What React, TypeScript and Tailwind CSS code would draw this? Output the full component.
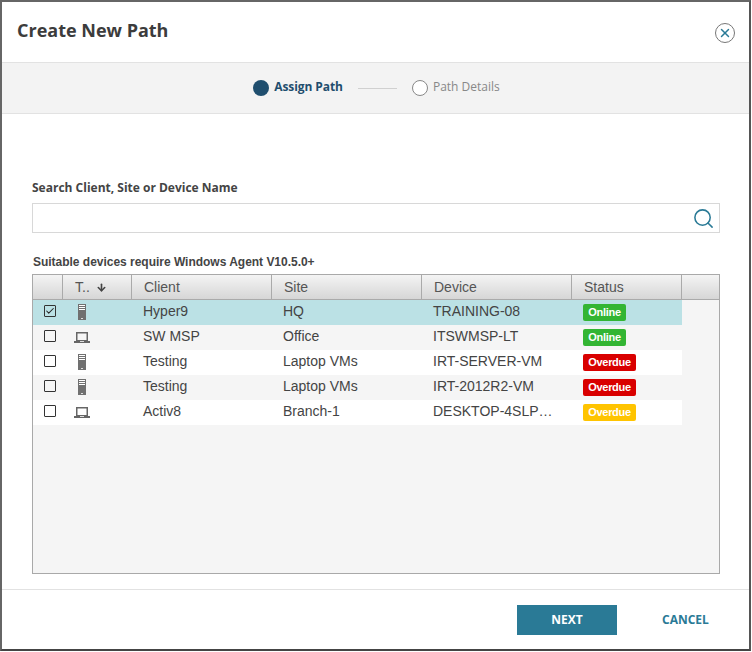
import { ArrowDown, Check, Search, X } from 'lucide-react'

type Row = {
  type: 'server' | 'laptop'
  client: string
  site: string
  device: string
  status: 'Online' | 'Overdue' | 'Late'
  checked?: boolean
}

const rows: Row[] = [
  { type: 'server', client: 'Hyper9', site: 'HQ', device: 'TRAINING-08', status: 'Online', checked: true },
  { type: 'laptop', client: 'SW MSP', site: 'Office', device: 'ITSWMSP-LT', status: 'Online' },
  { type: 'server', client: 'Testing', site: 'Laptop VMs', device: 'IRT-SERVER-VM', status: 'Overdue' },
  { type: 'server', client: 'Testing', site: 'Laptop VMs', device: 'IRT-2012R2-VM', status: 'Overdue' },
  { type: 'laptop', client: 'Activ8', site: 'Branch-1', device: 'DESKTOP-4SLP…', status: 'Late' },
]

function ServerIcon() {
  return (
    <svg width="8" height="16" viewBox="0 0 8 16">
      <rect x="0" y="0" width="8" height="16" fill="#707070" />
      <rect x="1" y="1" width="6" height="1" fill="#fff" />
      <rect x="1" y="3" width="6" height="1" fill="#fff" />
      <rect x="1" y="5" width="6" height="1" fill="#fff" />
      <rect x="3" y="14" width="2" height="1" fill="#ddd" />
    </svg>
  )
}

function LaptopIcon() {
  return (
    <svg width="16" height="11" viewBox="0 0 16 11">
      <rect x="2.75" y="0.75" width="10.5" height="8" fill="none" stroke="#666" strokeWidth="1.5" />
      <rect x="0" y="9" width="16" height="2" fill="#666" />
      <rect x="6" y="9" width="4" height="1" fill="#ddd" />
    </svg>
  )
}

function Badge({ status }: { status: Row['status'] }) {
  if (status === 'Online') {
    return <span className="flex h-[17px] w-[43px] items-center justify-center rounded-[2px] bg-[#33b533] text-[11px] font-bold tracking-[-0.3px] text-white">Online</span>
  }
  return (
    <span className={`flex h-[17px] w-[53px] items-center justify-center rounded-[2px] text-[11px] font-bold tracking-[-0.3px] text-white ${status === 'Late' ? 'bg-[#ffc400]' : 'bg-[#d90000]'}`}>
      Overdue
    </span>
  )
}

const headCell = 'flex h-full items-center border-r border-[#aaa] pl-3 text-[14px] text-[#555]'

export default function App() {
  return (
    <div className="h-[652px] w-[752px] bg-white pr-px pb-px font-['Liberation_Sans',sans-serif]">
      <div className="flex h-full w-full flex-col border-t-2 border-l-2 border-r-2 border-b-2 border-t-[#666] border-l-[#666] border-r-[#555] border-b-[#444]">
        <div className="flex h-[61px] shrink-0 items-center justify-between border-b border-[#e2e2e2] pr-[14px] pb-[4px] pl-[15px]">
          <h1 className="font-['Open_Sans',sans-serif] text-[18px] font-bold text-[#3c3c3c]">Create New Path</h1>
          <button className="mt-[5px] flex h-5 w-5 items-center justify-center rounded-full border border-[#777]">
            <X size={14} strokeWidth={2.5} className="text-[#2a7a96]" />
          </button>
        </div>

        <div className="flex h-[51px] shrink-0 items-center justify-center border-b border-[#e2e2e2] bg-[#f3f3f3] pl-[2px]">
          <span className="h-4 w-4 rounded-full bg-[#1f4e6e]" />
          <span className="ml-[5px] pb-[2px] font-['Open_Sans',sans-serif] text-[12px] font-bold tracking-[-0.08px] text-[#1f4e6e]">Assign Path</span>
          <span className="mr-[15px] ml-[15px] h-px w-[39px] bg-[#d0d0d0]" />
          <span className="h-4 w-4 rounded-full border border-[#888] bg-white" />
          <span className="ml-[5px] pb-[2px] font-['Open_Sans',sans-serif] text-[12px] text-[#888]">Path Details</span>
        </div>

        <div className="flex min-h-0 flex-1 flex-col pt-[66px] pr-[29px] pl-[30px]">
          <label className="font-['Open_Sans',sans-serif] text-[12px] leading-4 font-bold text-[#444]">Search Client, Site or Device Name</label>
          <div className="mt-[7px] flex h-[30px] items-center justify-end border border-[#d8d8d8] pr-[4px]">
            <Search size={23} strokeWidth={1.6} className="text-[#2a7a96]" />
          </div>
          <p className="mt-[21px] ml-px text-[12px] leading-4 font-bold tracking-[-0.02px] text-[#444]">Suitable devices require Windows Agent V10.5.0+</p>
          <div className="mt-[4px] flex h-[300px] flex-col border border-[#a9a9a9] bg-[#f5f5f5]">
            <div className="flex h-[25px] shrink-0 items-center border-b border-[#aaa] bg-gradient-to-b from-[#f4f4f4] to-[#d6d6d6]">
              <div className="h-full w-[30px] border-r border-[#aaa]" />
              <div className={`${headCell} w-[69px]`}>
                T..
                <ArrowDown size={11} strokeWidth={3.5} className="ml-[6px] text-[#444]" />
              </div>
              <div className={`${headCell} w-[140px]`}>Client</div>
              <div className={`${headCell} w-[150px]`}>Site</div>
              <div className={`${headCell} w-[150px]`}>Device</div>
              <div className={`${headCell} w-[110px]`}>Status</div>
            </div>
            {rows.map((r, i) => (
              <div
                key={i}
                className={`flex h-[25px] w-[649px] shrink-0 items-center text-[14px] text-[#444] ${r.checked ? 'bg-[#bbe1e5]' : i % 2 === 1 ? 'bg-[#f5f5f5]' : 'bg-white'}`}
              >
                <div className="flex w-[30px] justify-center pb-[4px] pl-[4px]">
                  <span className="flex h-[12px] w-[12px] items-center justify-center rounded-[1px] border border-[#333] bg-transparent">
                    {r.checked && <Check size={10} strokeWidth={2.5} className="text-[#222]" />}
                  </span>
                </div>
                <div className={`flex w-[69px] pb-px ${r.type === 'server' ? 'pl-[15px]' : 'pl-[11px]'}`}>
                  {r.type === 'server' ? <ServerIcon /> : <LaptopIcon />}
                </div>
                <div className="w-[140px] pb-[2px] pl-[11px]">{r.client}</div>
                <div className="w-[150px] pb-[2px] pl-[11px]">{r.site}</div>
                <div className="w-[150px] pb-[2px] pl-[11px]">{r.device}</div>
                <div className="w-[110px] pl-[11px]"><Badge status={r.status} /></div>
              </div>
            ))}
          </div>
        </div>

        <div className="flex h-[60px] shrink-0 items-start border-t border-[#e2e2e2] pt-[15px] pl-[515px]">
          <button className="h-[30px] w-[100px] bg-[#2a7a96] font-['Open_Sans',sans-serif] text-[12px] font-bold text-white">NEXT</button>
          <button className="ml-[45px] h-[30px] font-['Open_Sans',sans-serif] text-[12px] font-bold text-[#2a7a96]">CANCEL</button>
        </div>
      </div>
    </div>
  )
}
